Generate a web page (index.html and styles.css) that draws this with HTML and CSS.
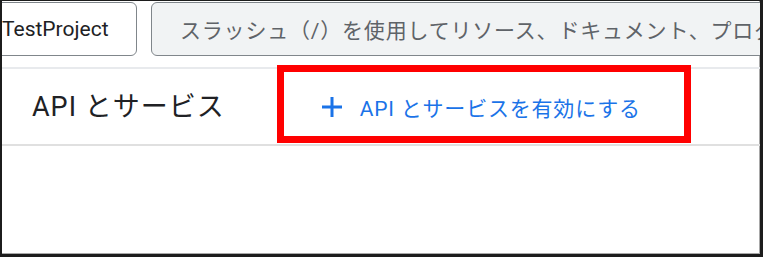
FILE: index.html
```html
<!DOCTYPE html>
<html lang="ja">
<head>
<meta charset="utf-8">
<title>API とサービス</title>
<link rel="stylesheet" href="styles.css">
</head>
<body>
<div class="frame">
  <div class="topbar">
    <div class="project">TestProject</div>
    <div class="search"><span class="search-text">スラッシュ（/）を使用してリソース、ドキュメント、プロダクトなどを検索</span></div>
  </div>
  <div class="page-header">
    <h1 class="title">API とサービス</h1>
    <button class="enable">
      <svg class="plus" width="22" height="22" viewBox="0 0 22 22"><path d="M11 1v20M1 11h20" stroke="#1a73e8" stroke-width="3" fill="none"/></svg>
      <span>API とサービスを有効にする</span>
    </button>
  </div>
  <div class="highlight"></div>
</div>
</body>
</html>
```

FILE: styles.css
```css
html, body {
  margin: 0;
  padding: 0;
  background: #fff;
}
.frame {
  position: relative;
  box-sizing: border-box;
  width: 763px;
  height: 257px;
  border: 2px solid #1c1c1c;
  border-top-width: 1px;
  border-right-width: 3px;
  border-bottom-width: 3px;
  box-shadow: inset -1px -1px 0 #a8a8a8;
  overflow: hidden;
  font-family: Roboto, "Noto Sans CJK JP", sans-serif;
  color: #202124;
}
.topbar {
  display: flex;
  gap: 14px;
  padding-top: 1px;
  margin-left: -14px;
  height: 55px;
}
.project {
  box-sizing: border-box;
  flex: 0 0 149px;
  height: 54px;
  border: 1px solid #80868b;
  border-radius: 6px;
  padding-left: 13px;
  display: flex;
  align-items: center;
  font-size: 21px;
  color: #202124;
  background: #fff;
}
.search {
  box-sizing: border-box;
  flex: 0 0 660px;
  height: 54px;
  border: 1px solid #80868b;
  border-radius: 6px;
  background: #f1f3f4;
  padding-left: 28px;
  display: flex;
  align-items: center;
  overflow: hidden;
}
.search-text {
  font-size: 21px;
  letter-spacing: 0.8px;
  color: #5f6368;
  white-space: nowrap;
}
.page-header {
  margin-top: 10px;
  height: 75px;
  border-top: 2px solid #e8eaed;
  border-bottom: 2px solid #e0e0e0;
  display: flex;
  align-items: center;
  padding-left: 30px;
}
.title {
  margin: 0 0 5px 0;
  font-size: 27px;
  letter-spacing: 1px;
  font-weight: 400;
  color: #202124;
}
.enable {
  margin-left: 96px;
  border: 0;
  background: none;
  padding: 0;
  display: flex;
  align-items: center;
  gap: 17px;
  font-family: inherit;
  font-size: 21px;
  letter-spacing: 0.8px;
  font-weight: 400;
  color: #1a73e8;
}
.plus {
  display: block;
}
.highlight {
  position: absolute;
  left: 275px;
  top: 64px;
  box-sizing: border-box;
  width: 414px;
  height: 78px;
  border: 7px solid #ff0000;
}
```
